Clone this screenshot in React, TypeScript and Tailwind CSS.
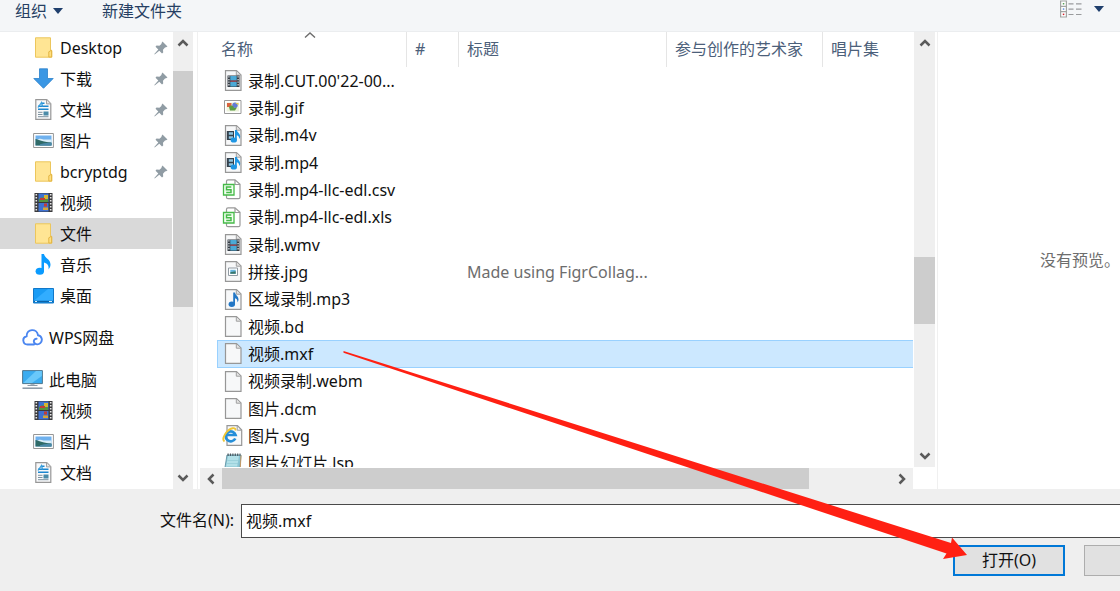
import { useState, type ReactNode } from "react";
import clsx from "clsx";

type IconName =
  | "folder"
  | "download"
  | "document"
  | "picture"
  | "film"
  | "music"
  | "desktop"
  | "cloud"
  | "computer"
  | "video"
  | "gif"
  | "media"
  | "sheet"
  | "jpg"
  | "audio"
  | "blank"
  | "ie"
  | "notepad";

type Place = {
  id: string;
  label: string;
  icon: IconName;
  pinned?: boolean;
  root?: boolean;
};

const places: Place[] = [
  { id: "q-desktop", label: "Desktop", icon: "folder", pinned: true },
  { id: "q-download", label: "下载", icon: "download", pinned: true },
  { id: "q-docs", label: "文档", icon: "document", pinned: true },
  { id: "q-pictures", label: "图片", icon: "picture", pinned: true },
  { id: "q-bcryptdg", label: "bcryptdg", icon: "folder", pinned: true },
  { id: "q-video", label: "视频", icon: "film" },
  { id: "q-files", label: "文件", icon: "folder" },
  { id: "q-music", label: "音乐", icon: "music" },
  { id: "q-desk", label: "桌面", icon: "desktop" },
  { id: "wps", label: "WPS网盘", icon: "cloud", root: true },
  { id: "pc", label: "此电脑", icon: "computer", root: true },
  { id: "pc-video", label: "视频", icon: "film" },
  { id: "pc-pictures", label: "图片", icon: "picture" },
  { id: "pc-docs", label: "文档", icon: "document" },
];

const files: { name: string; icon: IconName; title?: string }[] = [
  { name: "录制.CUT.00'22-00...", icon: "video" },
  { name: "录制.gif", icon: "gif" },
  { name: "录制.m4v", icon: "media" },
  { name: "录制.mp4", icon: "media" },
  { name: "录制.mp4-llc-edl.csv", icon: "sheet" },
  { name: "录制.mp4-llc-edl.xls", icon: "sheet" },
  { name: "录制.wmv", icon: "video" },
  { name: "拼接.jpg", icon: "jpg", title: "Made using FigrCollag..." },
  { name: "区域录制.mp3", icon: "audio" },
  { name: "视频.bd", icon: "blank" },
  { name: "视频.mxf", icon: "blank" },
  { name: "视频录制.webm", icon: "blank" },
  { name: "图片.dcm", icon: "blank" },
  { name: "图片.svg", icon: "ie" },
  { name: "图片幻灯片.lsp", icon: "notepad" },
];

const Page = () => (
  <>
    <path d="M3.500.7h11l4.500 4.300v15.300H3.500z" fill="#f7f8f9" stroke="#979797" strokeWidth="1.200" />
    <path d="M14.300.9v4.300h4.400" fill="#e4e4e4" stroke="#a0a0a0" />
  </>
);

const drawings: Record<IconName, ReactNode> = {
  folder: (
    <>
      <path d="M2.500.8h15v13h1.300v6.400H2.500z" fill="#ffe594" stroke="#ecc65c" />
      <path d="M15.800 20v-5.200l2.800-1.600v6.800z" fill="#ffdf80" stroke="#e3b544" />
    </>
  ),
  download: <path d="M6.500.8h8v9.700h5.700L10.500 20.300.8 10.500h5.700z" fill="#3b97e4" stroke="#2a80cc" strokeWidth=".8" />,
  document: (
    <>
      <path d="M2.800.7h11l4 4v15.600h-15z" fill="#f8f9fa" stroke="#979797" strokeWidth="1.200" />
      <path d="M13.500.8v4.100h4.200" fill="#e4e4e4" stroke="#a0a0a0" />
      <path d="M8 4.300h3.500M5 7.300h10.500M5 10.300h10.500" stroke="#1d87cf" strokeWidth="1.500" />
      <path d="M5 8.500l3.500-5 1 4" fill="none" stroke="#3aa0dd" strokeWidth="1.300" />
      <path d="M5 13.300h4.500M5 15.500h4.500M5 17.700h10.500" stroke="#7d929f" />
      <path d="M10.500 12.500h5v4h-5z" fill="#4b8ba8" />
    </>
  ),
  picture: (
    <>
      <path d="M.6 3.500h19.800v14H.6z" fill="#fff" stroke="#969696" />
      <path d="M2.500 5.500h16v10h-16z" fill="#6fb1ee" />
      <path d="M2.500 10.500c3-2 5-2.500 8-1h8v3h-16z" fill="#d9edf8" />
      <path d="M2.500 9c4 .4 6 3 16 3.500v3h-16z" fill="#2f6a67" />
      <path d="M7 14.200c4-1.400 7-1.400 11.500-1.200v2.500H7z" fill="#4a88a8" />
    </>
  ),
  film: (
    <>
      <path d="M1.500 1h18v19h-18z" fill="#3a3a3c" />
      <path d="M5.500 1.500h10v8.500h-10zM5.500 11h10v8.500h-10z" fill="#3f72d2" />
      <path d="M6 7.500c2-3 5-3 9 0v2.500H6z" fill="#57933c" />
      <path d="M11 3h4v4h-4z" fill="#d6b631" />
      <path d="M7 6h5v2H7zM11 11.500h3v3h-3z" fill="#c43d35" />
      <path d="M10 15.500h5V18h-5z" fill="#d8a534" />
      <path d="M3.300 2v18M17.700 2v18" stroke="#e8e8e8" strokeWidth="1.600" strokeDasharray="1.500 1.500" />
    </>
  ),
  music: (
    <>
      <ellipse cx="6.800" cy="17.200" rx="4.200" ry="3.500" fill="#0a9bff" />
      <path d="M8.500 0h2.500c.4 4 6.500 5 6.500 10.500 0 2-.8 3.500-2 5 .5-4-1-6-4.500-7v9H8.500z" fill="#0a9bff" />
    </>
  ),
  desktop: (
    <>
      <path d="M.5 3.500h20v14.500H.5z" fill="#1a9cf5" stroke="#1178c9" />
      <path d="M1 15.500L15 4h5v12H1z" fill="#32adff" />
      <path d="M1 16.500h19" stroke="#0c63a8" strokeWidth="1.500" />
      <path d="M2 16.500h2m12 0h3" stroke="#d8efff" />
    </>
  ),
  cloud: (
    <path
      d="M12 17.500H5.500A4.200 4.200 0 0 1 4.600 9.200C4.600 1.500 15 1 16 8.200c4 .6 5 5.300 2.300 8-1.700 1.700-4.800 1.600-6-.4-1.200-2 .2-4.300 2.300-4"
      fill="none"
      stroke="#4b86f0"
      strokeWidth="1.900"
      strokeLinecap="round"
    />
  ),
  computer: (
    <>
      <path d="M.6 1.600h19.800v13H.6z" fill="#3aacf0" stroke="#50788f" />
      <path d="M1.200 14L14 2h5.800v5L10 14z" fill="#69c8fa" />
      <path d="M8.500 15h4v2h-4z" fill="#a8b4be" />
      <path d="M5.500 16.500h10" stroke="#8c9aa6" />
      <path d="M.5 19.200h20" stroke="#8897a5" strokeWidth="1.500" />
    </>
  ),
  video: (
    <>
      <Page />
      <path d="M5.500 5.500h12v11.500h-12z" fill="#343c44" />
      <path d="M8.300 6h6.400v4.500H8.300zM8.300 12h6.400v4.500H8.300z" fill="#4ba9d6" />
      <path d="M8.300 10.500h6.400v1.300H8.300z" fill="#a54c5a" />
      <path d="M6.900 6.300v10.500M16.100 6.300v10.500" stroke="#e5e9ec" strokeWidth="1.200" strokeDasharray="1.300 1.300" />
    </>
  ),
  gif: (
    <>
      <path d="M2.500 3.500h16.500v13H2.500z" fill="#fff" stroke="#9a9a9a" />
      <path d="M4.500 5.500h12.500v9H4.500z" fill="#edf3da" />
      <path d="M5 6h4.500v4H5z" fill="#d9633f" />
      <circle cx="13" cy="8.300" r="2.700" fill="#617ad6" />
      <path d="M7 10c2-3 5-1 5 1l3-.5-2 3H8z" fill="#5b9b42" />
      <path d="M13 6h3.500v2z" fill="#e5c951" />
    </>
  ),
  media: (
    <>
      <Page />
      <path d="M4.800 6h7.200v9H4.800z" fill="#34414d" />
      <path d="M6.800 7.300h4.200v2.400H6.800zM6.800 11.300h4.200v2.400H6.800z" fill="#8ec4df" />
      <ellipse cx="11.800" cy="15" rx="3.200" ry="2.600" fill="#1e96e3" />
      <path d="M13 5h1.800c.4 2.500 3.400 3.400 3.400 6.500 0 1-.5 2-1 2.500 0-2.200-.7-3.400-2.400-3.800V15H13z" fill="#1e96e3" />
    </>
  ),
  sheet: (
    <>
      <path d="M4.500 5V2.200Q4.500.8 6 .8h7l5 4.500v12.900q0 1.500-1.500 1.500H6q-1.500 0-1.500-1.500V16" fill="#fff" stroke="#999" strokeWidth="1.200" />
      <path d="M13 1v4.500h5" fill="none" stroke="#999" strokeWidth="1.200" />
      <path d="M1.500 5.500h10.500v10.500H1.500z" fill="#f2fff0" stroke="#45ba48" strokeWidth="1.300" />
      <path d="M9.300 8H4.500v2.700H9v2.800H4.200" fill="none" stroke="#45ba48" strokeWidth="1.500" />
    </>
  ),
  jpg: (
    <>
      <Page />
      <path d="M6.500 7h9v7.500h-9z" fill="#fff" stroke="#919ba3" />
      <path d="M8.300 8.800h5.400v4H8.300z" fill="#67b5df" />
      <path d="M8.300 12.800v-1.600l5.400-.9v2.500z" fill="#39776b" />
    </>
  ),
  audio: (
    <>
      <Page />
      <ellipse cx="9.800" cy="15.300" rx="3.200" ry="2.700" fill="#2377c5" />
      <path d="M11.200 3.500H13c.3 2.700 3.500 3.500 3.500 7 0 1.200-.5 2.100-1 2.800 0-2.400-.7-3.500-2.500-4v6h-1.800z" fill="#2377c5" />
    </>
  ),
  blank: <Page />,
  ie: (
    <>
      <path d="M5 .7h10.500l4.200 4.300v15.300H5z" fill="#f8f9fa" stroke="#979797" strokeWidth="1.200" />
      <path d="M15.200.9v4.300h4.400" fill="none" stroke="#9b9b9b" />
      <path d="M13.300 13.500a5 5 0 1 1 .3-3.500H5" fill="none" stroke="#258ed8" strokeWidth="2.700" />
      <path d="M2.500 16.500C-1 14 4.500 4.500 10.500 3.200c2.500-.5 3.300.8 2.800 2.300" fill="none" stroke="#efc636" strokeWidth="1.900" />
    </>
  ),
  notepad: (
    <>
      <path d="M5 2h14l-1.500 18.500H2z" fill="#89c5d4" stroke="#6a9baa" />
      <path d="M6 3h11l-3 17H3z" fill="#b2e0e8" />
      <path d="M5.500 7.500h11M5 10.500h11M4.500 13.500h11M4 16.500h10" stroke="#8dc7d4" strokeWidth=".6" />
      <path d="M5.500 1.800h13" stroke="#4c5960" strokeWidth="2.400" strokeDasharray="1.200 1.200" />
      <path d="M19 2.500l-1 17.500" stroke="#c59a66" />
    </>
  ),
};

function Icon({ name }: { name: IconName }) {
  return (
    <svg viewBox="0 0 21 21" className="size-[21px] shrink-0" aria-hidden="true">
      {drawings[name]}
    </svg>
  );
}

function Pin() {
  return (
    <svg viewBox="0 0 14 14" className="size-3.5 shrink-0" aria-hidden="true">
      <path d="M8.500.5l5 5-1.500.8-1 .2-2 2.200.2 2.800-1.200 1L5.300 9.800.7 13.500.3 13l4-4.500L1.500 5.700l1-1.100 2.900.2 2-1.900.2-1z" fill="#909ca4" />
    </svg>
  );
}

function DownTriangle() {
  return (
    <svg viewBox="0 0 10 6" className="h-1.5 w-2.5" aria-hidden="true">
      <path d="M0 0h10L5 6z" fill="#1f3f6d" />
    </svg>
  );
}

const chevrons = {
  up: "M1.500 8.500L6 4l4.500 4.500",
  down: "M1.500 3.500L6 8l4.500-4.500",
  left: "M8.500 1.500L4 6l4.500 4.500",
  right: "M3.500 1.500L8 6l-4.500 4.500",
};

function ScrollButton({ dir, label }: { dir: keyof typeof chevrons; label: string }) {
  return (
    <button aria-label={label} className="flex size-[22px] shrink-0 items-center justify-center self-center">
      <svg viewBox="0 0 12 12" className="size-3" aria-hidden="true">
        <path d={chevrons[dir]} fill="none" stroke="#5a5a5a" strokeWidth="2.500" />
      </svg>
    </button>
  );
}

type ScrollBarProps = {
  horizontal?: boolean;
  before: number;
  thumb: number;
  after: number;
  className?: string;
};

function ScrollBar({ horizontal, before, thumb, after, className }: ScrollBarProps) {
  return (
    <div className={clsx("flex shrink-0 bg-[#efefef]", !horizontal && "flex-col", className)}>
      <ScrollButton dir={horizontal ? "left" : "up"} label={horizontal ? "向左滚动" : "向上滚动"} />
      <div style={{ flexGrow: before }} />
      <div className="bg-[#cdcdcd]" style={{ flexGrow: thumb }} />
      <div style={{ flexGrow: after }} />
      <ScrollButton dir={horizontal ? "right" : "down"} label={horizontal ? "向右滚动" : "向下滚动"} />
    </div>
  );
}

function Toolbar() {
  return (
    <header className="flex h-8 shrink-0 items-start border-b border-[#ebedef] bg-[#f4f6f8] pr-4 pl-[15px] leading-[22px] text-[#263f63]">
      <button className="flex items-center gap-1.5">
        组织
        <DownTriangle />
      </button>
      <button className="ml-[39px]">新建文件夹</button>
      <button aria-label="更改视图" className="ml-auto flex items-center gap-3">
        <svg viewBox="0 0 22 18" className="h-[18px] w-[22px]" aria-hidden="true">
          <path d="M.6 1h5.800v16H.6zM.6 6.300h5.800M.6 11.700h5.800" fill="#fff" stroke="#a2a5a3" strokeWidth="1.200" />
          <path d="M2.800 3h1.500v1.500H2.800z" fill="#58a158" />
          <path d="M2.800 8.300h1.500v1.500H2.800z" fill="#5a8ee0" />
          <path d="M2.800 13.600h1.500v1.500H2.800z" fill="#d3232d" />
          <path d="M8.500 3.800h5M16 3.800h5.500M8.500 9.200h5M16 9.200h5.500M8.500 14.500h5M16 14.500h5.500" stroke="#999b9d" strokeWidth="1.200" />
        </svg>
        <DownTriangle />
      </button>
    </header>
  );
}

function Sidebar() {
  const [active, setActive] = useState("q-files");

  return (
    <aside className="flex w-[198px] shrink-0 border-r border-[#f0f0f0] pr-1">
      <nav className="min-w-0 flex-1 overflow-hidden pr-px">
        {places.map((place) => (
          <button
            key={place.id}
            onClick={() => setActive(place.id)}
            className={clsx(
              "flex h-[31px] w-full items-center gap-1.5 pr-1 text-left",
              place.root ? "mt-[11px] pl-[22px]" : "pl-[33px]",
              active === place.id && "bg-[#d9d9d9]"
            )}
          >
            <Icon name={place.icon} />
            <span className="flex-1">{place.label}</span>
            {place.pinned && <Pin />}
          </button>
        ))}
      </nav>
      <ScrollBar before={17} thumb={236} after={160} className="w-5" />
    </aside>
  );
}

const th = "h-[35px] border-r border-[#e5e5e5] p-0 pb-0.5 pl-2 text-left font-normal";

function FileTable({ selected, onSelect }: { selected: string; onSelect: (name: string) => void }) {
  return (
    <table className="h-[445px] w-full table-fixed border-separate border-spacing-0">
      <colgroup>
        <col className="w-[190px]" />
        <col className="w-[52px]" />
        <col className="w-[208px]" />
        <col className="w-[156px]" />
        <col />
      </colgroup>
      <thead className="text-[#4c607a]">
        <tr>
          <th className="relative h-[35px] border-r border-[#e5e5e5] p-0 pb-0.5 pl-1 text-left font-normal">
            名称
            <svg viewBox="0 0 12 6" className="absolute top-0 left-[87px] h-1.5 w-3" aria-hidden="true">
              <path d="M1 5.500L6 1l5 4.500" fill="none" stroke="#6d6d6d" strokeWidth="1.400" />
            </svg>
          </th>
          <th className={th}>#</th>
          <th className={th}>标题</th>
          <th className={th}>参与创作的艺术家</th>
          <th className="h-[35px] p-0 pb-0.5 pl-2 text-left font-normal">唱片集</th>
        </tr>
      </thead>
      <tbody>
        {files.map((file) => {
          const cell = clsx(
            "overflow-hidden border-y p-0 whitespace-nowrap",
            file.name === selected ? "border-[#99d1ff] bg-[#cce8ff]" : "border-transparent"
          );
          return (
            <tr key={file.name} onClick={() => onSelect(file.name)}>
              <td className={clsx(cell, "border-l pl-1")}>
                <div className="flex items-center gap-[5px]">
                  <Icon name={file.icon} />
                  {file.name}
                </div>
              </td>
              <td className={cell} />
              <td className={clsx(cell, "pl-2 text-[#6d6d6d]")}>{file.title}</td>
              <td className={cell} />
              <td className={cell} />
            </tr>
          );
        })}
      </tbody>
    </table>
  );
}

export default function App() {
  const [fileName, setFileName] = useState("视频.mxf");

  return (
    <div className="relative flex h-screen flex-col overflow-hidden bg-[#efefef] font-['Noto_Sans','Noto_Sans_CJK_SC',sans-serif] text-base leading-6 text-[#111]">
      <Toolbar />

      <main className="flex min-h-0 flex-1 bg-white">
        <Sidebar />

        <section className="flex min-w-0 flex-1 flex-col">
          <div className="flex min-h-0 flex-1 pr-0.5">
            <div className="mr-px min-w-0 flex-1 overflow-hidden pl-[19px]">
              <FileTable selected={fileName} onSelect={setFileName} />
            </div>
            <ScrollBar before={203} thumb={67} after={121} className="w-[21px]" />
          </div>
          <ScrollBar horizontal before={0} thumb={587} after={82} className="mt-px mr-6 ml-0.5 h-[21px]" />
        </section>

        <section className="flex w-[183px] shrink-0 items-center justify-end border-l border-[#f0f0f0] pb-0.5 text-[#6d6d6d]">
          没有预览。
        </section>
      </main>

      <footer className="shrink-0 pt-[15px] pb-[15px]">
        <div className="flex items-center gap-[7px] pl-40">
          <label htmlFor="file-name" className="pb-0.5">
            文件名(N):
          </label>
          <input
            id="file-name"
            value={fileName}
            onChange={(e) => setFileName(e.target.value)}
            className="h-[34px] min-w-0 flex-1 border border-r-0 border-[#4a4a4a] bg-white px-1 pb-0.5 outline-none"
          />
        </div>
        <div className="mt-[7px] flex justify-end gap-[19px]">
          <button className="h-[31px] w-28 border-2 border-[#0078d7] bg-[#e1e1e1] pb-0.5 leading-none">打开(O)</button>
          <button aria-label="取消" className="h-[31px] w-9 border border-r-0 border-[#adadad] bg-[#e1e1e1]" />
        </div>
      </footer>

      {/* arrow from the chosen file to the open button */}
      <svg
        viewBox="343 350 625 210"
        className="pointer-events-none absolute top-[350px] left-[343px] h-[210px] w-[625px]"
        aria-hidden="true"
      >
        <path d="M343.500 351L951 543l1-5.500L967 555l-24 4 3.500-5.500L343.500 352.800z" fill="#ff2013" />
      </svg>
    </div>
  );
}
